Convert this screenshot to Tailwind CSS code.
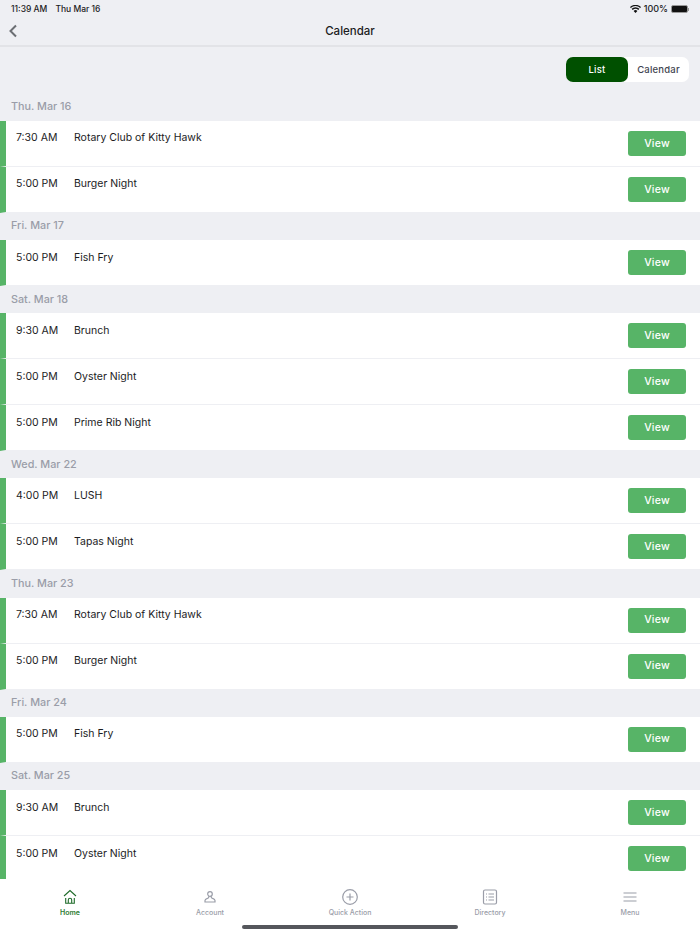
<!DOCTYPE html>
<html lang="en">
  <head>
    <meta charset="UTF-8" />
    <meta name="viewport" content="width=device-width, initial-scale=1.0" />
    <title>Calendar</title>
    <script src="https://cdn.jsdelivr.net/npm/@tailwindcss/browser@4"></script>
  </head>
  <body class="bg-[#eeeff3] font-['Inter','Liberation_Sans',sans-serif] text-[#1c1c1e]">
    <div class="relative flex flex-col h-[934px] w-[700px] overflow-hidden">
      <!-- Status bar -->
      <div class="h-4 shrink-0 flex items-center justify-between px-[11px] text-[8.500px] font-medium pt-[2px]">
        <div class="flex gap-[8px]"><span>11:39 AM</span><span>Thu Mar 16</span></div>
        <div class="flex items-center gap-[3px]">
          <svg width="11" height="8" viewBox="0 0 11 8"><path d="M5.5 8 3.6 5.9a2.7 2.7 0 0 1 3.8 0zM2.7 5 1.6 3.8a5.6 5.6 0 0 1 7.8 0L8.3 5a4 4 0 0 0-5.6 0zM.8 3 0 2a8 8 0 0 1 11 0l-.8 1a6.8 6.8 0 0 0-9.4 0z" fill="#111"/></svg>
          <span class="text-[9px]">100%</span>
          <div class="flex items-center">
            <div class="w-[17px] h-[8px] rounded-[2px] bg-[#111] border border-[#999]"></div>
            <div class="w-[1px] h-[3px] bg-[#999]"></div>
          </div>
        </div>
      </div>

      <!-- Nav -->
      <header class="relative h-[31px] shrink-0 flex items-center justify-center border-b-2 border-[#e2e3e7]">
        <svg class="absolute left-[8px] top-[8px]" width="10" height="14" viewBox="0 0 10 14"><path d="M8 1.5 2.5 7 8 12.5" fill="none" stroke="#6b6e73" stroke-width="2"/></svg>
        <h1 class="text-[11.5px] font-medium mt-[2px]">Calendar</h1>
      </header>

      <!-- Toggle -->
      <div class="flex justify-end pt-[10px] pr-[11px] shrink-0">
        <div class="flex h-[25px] w-[123px] rounded-[7px] bg-white text-[9.5px] font-medium tracking-[0.2px]">
          <div class="w-[62px] pt-[1px] rounded-[7px] bg-[#005000] text-white flex items-center justify-center">List</div>
          <div class="flex-1 pt-[1px] flex items-center justify-center text-[#3f4450]">Calendar</div>
        </div>
      </div>

      <!-- List -->
      <main id="list" class="flex-1 overflow-hidden mt-[11.7px]"></main>

      <!-- Tab bar -->
      <nav class="h-[55px] shrink-0 bg-white grid grid-cols-5 text-[7px] font-medium text-[#9a9da8]">
        <div class="flex flex-col items-center pt-[10px] font-semibold text-[#2e7d32]">
          <svg class="mb-[3px]" width="16" height="16" viewBox="0 0 16 16" fill="none" stroke="#1f6b2a" stroke-width="1.1"><path d="M2 7 8 1.500 14 7"/><path d="M3.700 9v5.200h8.600V9"/><path d="M6.300 14v-3a1.700 1.700 0 0 1 3.400 0v3"/></svg>
          <span>Home</span>
        </div>
        <div class="flex flex-col items-center pt-[10px]">
          <svg class="mb-[3px]" width="16" height="16" viewBox="0 0 16 16" fill="none" stroke="#9a9da8" stroke-width="1.2"><circle cx="8" cy="5" r="2.300"/><path d="M6.700 7.300v1.200c0 1-3.700.8-3.700 3V13h10v-1.500c0-2.200-3.700-2-3.700-3V7.300"/></svg>
          <span>Account</span>
        </div>
        <div class="flex flex-col items-center pt-[10px]">
          <svg class="mb-[3px]" width="16" height="16" viewBox="0 0 16 16" fill="none" stroke="#9a9da8" stroke-width="1.200"><circle cx="8" cy="8" r="7.300"/><path d="M8 4.500v7M4.500 8h7"/></svg>
          <span>Quick Action</span>
        </div>
        <div class="flex flex-col items-center pt-[10px]">
          <svg class="mb-[3px]" width="16" height="16" viewBox="0 0 16 16" fill="none" stroke="#9a9da8" stroke-width="1.200"><rect x="1.500" y="1" width="13" height="14" rx="1.500"/><path d="M4 5h1M6.500 5h5.500M4 8h1M6.500 8h5.500M4 11h1M6.500 11h5.500"/></svg>
          <span>Directory</span>
        </div>
        <div class="flex flex-col items-center pt-[10px]">
          <svg class="mb-[3px]" width="16" height="16" viewBox="0 0 16 16" fill="none" stroke="#9a9da8" stroke-width="1.200"><path d="M1.500 4h13M1.500 8h13M1.500 12h13"/></svg>
          <span>Menu</span>
        </div>
      </nav>

      <!-- Home indicator -->
      <div class="absolute left-[242px] top-[924.500px] w-[216px] h-[4px] rounded-full bg-[#55575c]"></div>
    </div>

    <script>
      const days = [
        ["Thu. Mar 16", [["7:30 AM", "Rotary Club of Kitty Hawk"], ["5:00 PM", "Burger Night"]]],
        ["Fri. Mar 17", [["5:00 PM", "Fish Fry"]]],
        ["Sat. Mar 18", [["9:30 AM", "Brunch"], ["5:00 PM", "Oyster Night"], ["5:00 PM", "Prime Rib Night"]]],
        ["Wed. Mar 22", [["4:00 PM", "LUSH"], ["5:00 PM", "Tapas Night"]]],
        ["Thu. Mar 23", [["7:30 AM", "Rotary Club of Kitty Hawk"], ["5:00 PM", "Burger Night"]]],
        ["Fri. Mar 24", [["5:00 PM", "Fish Fry"]]],
        ["Sat. Mar 25", [["9:30 AM", "Brunch"], ["5:00 PM", "Oyster Night"]]],
      ];

      document.getElementById("list").innerHTML = days
        .map(
          ([day, events]) => `
        <h2 class="h-[27.2px] pl-[11px] flex items-center text-[10.8px] font-medium text-[#9a9da8]">${day}</h2>
        ${events
          .map(
            ([time, name]) => `
          <div class="h-[46px] bg-white border-b border-[#eeeff3] border-l-[6px] border-l-[#57b467] flex pl-[10px] pr-[14px]">
            <span class="w-[58px] text-[10.5px] leading-none pt-[12.5px]">${time}</span>
            <span class="flex-1 text-[10.5px] leading-none pt-[12.5px]">${name}</span>
            <button class="mt-[10px] w-[58px] h-[25px] rounded-[3px] bg-[#57b467] text-white text-[10.5px] font-medium tracking-[0.2px]">View</button>
          </div>`
          )
          .join("")}`
        )
        .join("");
    </script>
  </body>
</html>
